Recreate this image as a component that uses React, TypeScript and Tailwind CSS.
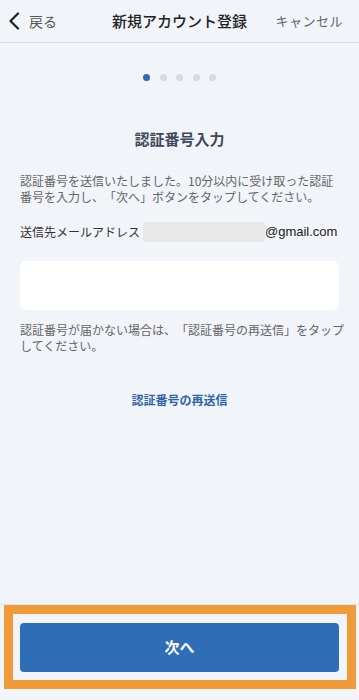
import React from "react";

const font = { fontFamily: '"Noto Sans CJK JP", "Noto Sans", sans-serif' };

const Dots: React.FC<{ count: number; active: number }> = ({ count, active }) => (
  <div className="flex justify-center gap-[9.5px]">
    {Array.from({ length: count }).map((_, i) => (
      <div
        key={i}
        className={`w-[7px] h-[7px] rounded-full ${i === active ? "bg-[#2f6bb5]" : "bg-[#d6d9de]"}`}
      />
    ))}
  </div>
);

export default function App() {
  return (
    <div
      className="w-[359px] h-[700px] bg-[#f1f4f9] flex flex-col relative overflow-hidden [text-spacing-trim:space-all]"
      style={font}
    >
      {/* header */}
      <div className="h-[43px] border-b border-[#d9dde3] flex items-center px-2 relative shrink-0">
        <div className="flex items-center gap-[9px]">
          <svg width="12" height="18" viewBox="0 0 12 18" fill="none">
            <path d="M10 1.5L2.5 9L10 16.5" stroke="#222" strokeWidth="2.2" strokeLinecap="round" strokeLinejoin="round" />
          </svg>
          <span className="text-[14px] text-[#555]">戻る</span>
        </div>
        <div className="absolute left-0 right-0 text-center text-[15px] font-medium text-[#222] pointer-events-none">
          新規アカウント登録
        </div>
        <span className="ml-auto mr-[8px] text-[13px] text-[#666] tracking-[0.5px]">キャンセル</span>
      </div>

      {/* body */}
      <div className="flex-1 px-5">
        <div className="mt-[31px]">
          <Dots count={5} active={0} />
        </div>
        <h1 className="mt-[47px] text-center text-[15px] leading-[22px] font-bold text-[#3d4a5b]">認証番号入力</h1>
        <p className="mt-[23px] text-[12px] leading-[16px] text-[#666]">
          認証番号を送信いたしました。10分以内に受け取った認証番号を入力し、「次へ」ボタンをタップしてください。
        </p>
        <div className="mt-[17px] flex items-center h-[20px]">
          <span className="text-[12px] font-normal text-[#333] w-[123px]">送信先メールアドレス</span>
          <div className="w-[122px] h-[20px] bg-[#e9e9ea]" />
          <span className="text-[13px] text-[#222]" style={{ fontFamily: '"Liberation Sans", Arial, sans-serif' }}>
            @gmail.com
          </span>
        </div>
        <div className="mt-[19px] h-[49px] bg-white rounded-[6px]" />
        <p className="mt-[12px] -mr-[12px] text-[12px] leading-[16px] text-[#666]">
          認証番号が届かない場合は、「認証番号の再送信」をタップしてください。
        </p>
        <div className="mt-[37px] text-center text-[12px] font-bold text-[#2f64a8]">認証番号の再送信</div>
      </div>

      {/* footer */}
      <div className="h-[96px] border-t border-[#e2e6ec] shrink-0 px-5 pt-[18px] relative">
        <button className="w-full h-[49px] rounded-[4px] bg-[#2f6db6] text-white text-[15px] font-bold">次へ</button>
        <div className="absolute left-[4px] top-0 w-[352px] h-[84px] border-[9px] border-[#f19b38] pointer-events-none" />
      </div>
    </div>
  );
}
